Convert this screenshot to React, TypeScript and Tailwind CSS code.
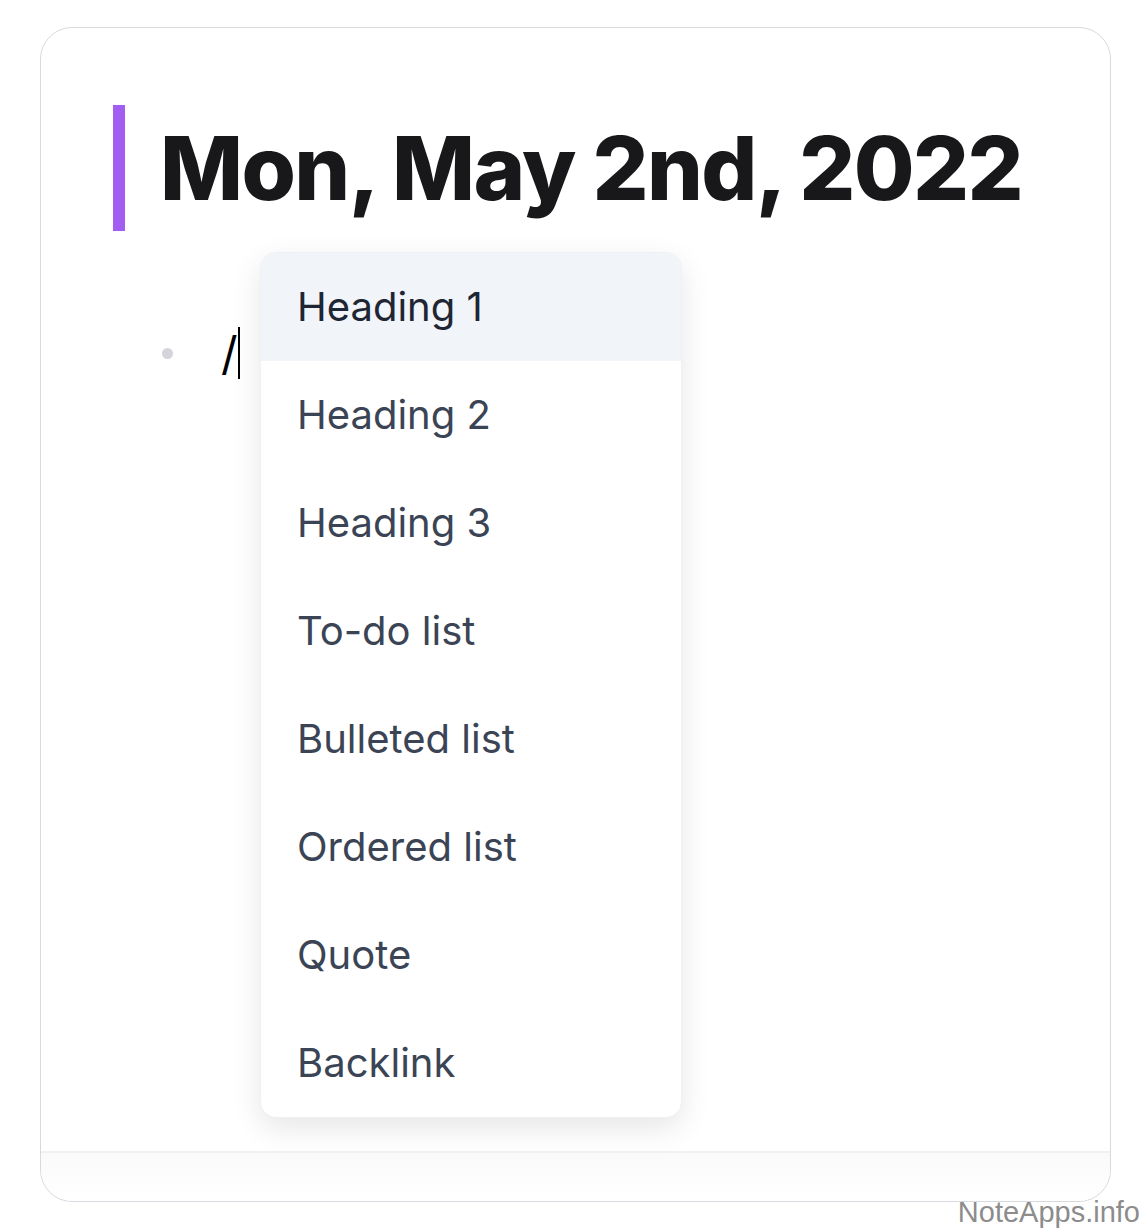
const items = [
  "Heading 1",
  "Heading 2",
  "Heading 3",
  "To-do list",
  "Bulleted list",
  "Ordered list",
  "Quote",
  "Backlink",
];

const SlashMenu = () => {
  return (
    <div className="absolute left-[219px] top-[224px] w-[422px] overflow-hidden rounded-[16px] border border-[#eef0f3] bg-white shadow-[0_10px_30px_rgba(0,0,0,0.10)]">
      {items.map((item, i) => (
        <div
          key={item}
          className={
            i === 0
              ? "flex h-[108px] items-center bg-[#f1f4f9] pl-[36px] text-[40px] text-[#1f2633]"
              : "flex h-[108px] items-center pl-[36px] text-[40px] text-[#3b4455]"
          }
        >
          {item}
        </div>
      ))}
    </div>
  );
};

export default function App() {
  return (
    <div
      className="relative h-[1230px] w-[1144px] overflow-hidden bg-white pl-[40px] pt-[27px]"
      style={{ fontFamily: "Inter, 'Noto Sans', sans-serif" }}
    >
      <div className="relative flex h-[1175px] w-[1071px] flex-col rounded-[32px] border border-[#d6dadf]">
        <div className="flex items-center gap-[35px] pl-[72px] pt-[77px]">
          <div className="h-[126px] w-[12px] bg-[#a15ef1]" />
          <h1 className="text-[88px] font-extrabold leading-none tracking-[-0.018em] text-[#18181b]">
            Mon, May 2nd, 2022
          </h1>
        </div>

        <div className="flex items-center pl-[121px] pt-[96px]">
          <div className="h-[11px] w-[11px] rounded-full bg-[#d4d4da]" />
          <div className="ml-[48px] flex items-center">
            <span className="text-[46px] leading-none text-black">/</span>
            <div className="h-[52px] w-[2px] bg-black" />
          </div>
        </div>

        <SlashMenu />

        <div className="mt-auto h-[50px] rounded-b-[32px] border-t-2 border-[#eff1f3] bg-gradient-to-b from-[#fafafa] to-white" />
      </div>

      <div
        className="absolute bottom-[3px] right-[4px] text-[29px] leading-none text-[#8c8c8c]"
        style={{ fontFamily: "'Liberation Sans', Arial, sans-serif" }}
      >
        NoteApps.info
      </div>
    </div>
  );
}
